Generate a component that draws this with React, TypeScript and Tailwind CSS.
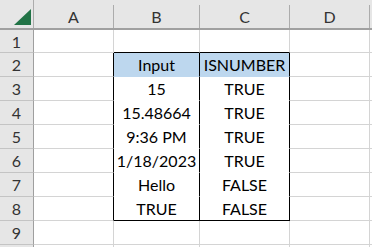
import React from "react";

const GRID = "border-[#d4d4d4]";

type RowData = { n: number; b?: string; c?: string };

const rows: RowData[] = [
  { n: 1 },
  { n: 2, b: "Input", c: "ISNUMBER" },
  { n: 3, b: "15", c: "TRUE" },
  { n: 4, b: "15.48664", c: "TRUE" },
  { n: 5, b: "9:36 PM", c: "TRUE" },
  { n: 6, b: "1/18/2023", c: "TRUE" },
  { n: 7, b: "Hello", c: "FALSE" },
  { n: 8, b: "TRUE", c: "FALSE" },
  { n: 9 },
  { n: 10 },
];

function rightColor(n: number) {
  return n >= 2 && n <= 8 ? "border-r-black" : "border-r-[#d4d4d4]";
}

function bottomColor(n: number) {
  if (n === 1 || n === 8) return "border-b-black";
  if (n === 2) return "border-b-[#bdd7ee]";
  if (n >= 3 && n <= 7) return "border-b-white";
  return "border-b-[#d4d4d4]";
}

function ColHeader({ w, label }: { w: string; label: string }) {
  return (
    <div className={`${w} h-full flex shrink-0`}>
      <div className="flex-1 flex items-center justify-center pt-[6px] text-[#333]">{label}</div>
      <div className="w-px mt-[5px] bg-[#acacac]" />
    </div>
  );
}

export default function App() {
  return (
    <div
      className="w-[372px] h-[247px] overflow-hidden bg-white text-[16px] text-black"
      style={{ fontFamily: "Lato, 'Liberation Sans', sans-serif" }}
    >
      {/* column header */}
      <div className="flex h-[30px] bg-[#e6e6e6] border-b-2 border-b-[#a0a0a0]">
        <div className="w-[34px] h-full flex shrink-0">
          <div className="flex-1">
            <svg width="33" height="28" viewBox="0 0 33 28" className="block">
              <polygon points="14,25 31,25 31,9" fill="#217346" />
            </svg>
          </div>
          <div className="w-px bg-[#acacac]" />
        </div>
        <ColHeader w="w-[80px]" label="A" />
        <ColHeader w="w-[86px]" label="B" />
        <ColHeader w="w-[90px]" label="C" />
        <ColHeader w="w-[80px]" label="D" />
        <div className="flex-1" />
      </div>

      {rows.map((r) => {
        const h = r.n === 1 ? "h-[23px]" : "h-[24px]";
        const isHead = r.n === 2;
        const inTable = r.n >= 2 && r.n <= 8;
        const bg = isHead ? "bg-[#bdd7ee]" : "bg-white";
        return (
          <div key={r.n} className={`flex ${h}`}>
            <div className="w-[34px] shrink-0 flex items-center justify-center bg-[#e6e6e6] border-r border-r-[#9f9f9f] border-b border-b-[#c4c4c4] text-[#333] pt-[1px]">
              {r.n < 10 ? r.n : null}
            </div>
            <div className={`w-[80px] shrink-0 border-r border-b ${GRID} ${rightColor(r.n)}`} />
            <div
              className={`w-[86px] shrink-0 flex items-center justify-center border-r border-b pt-[1px] ${GRID} ${rightColor(r.n)} ${bottomColor(r.n)} ${inTable ? bg : ""}`}
            >
              {r.b}
            </div>
            <div
              className={`w-[90px] shrink-0 flex items-center justify-center border-r border-b pt-[1px] ${GRID} ${rightColor(r.n)} ${bottomColor(r.n)} ${inTable ? bg : ""}`}
            >
              {r.c}
            </div>
            <div className={`w-[80px] shrink-0 border-r border-b ${GRID}`} />
            <div className={`flex-1 border-b ${GRID}`} />
          </div>
        );
      })}
    </div>
  );
}
